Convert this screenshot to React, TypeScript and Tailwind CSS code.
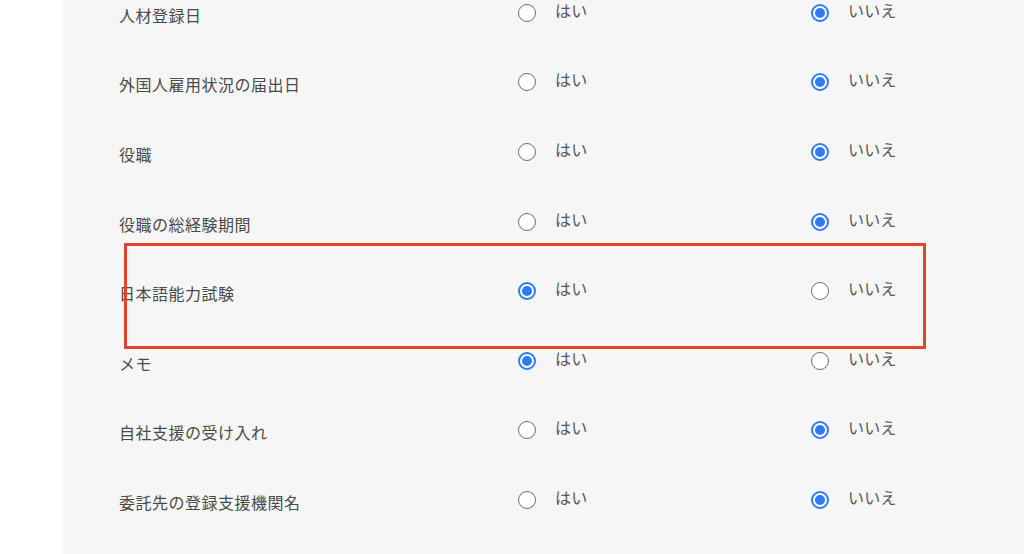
const rows: { label: string; yes: boolean }[] = [
  { label: "人材登録日", yes: false },
  { label: "外国人雇用状況の届出日", yes: false },
  { label: "役職", yes: false },
  { label: "役職の総経験期間", yes: false },
  { label: "日本語能力試験", yes: true },
  { label: "メモ", yes: true },
  { label: "自社支援の受け入れ", yes: false },
  { label: "委託先の登録支援機関名", yes: false },
];

const Radio = ({ checked }: { checked: boolean }) =>
  checked ? (
    <span className="flex items-center justify-center w-[18px] h-[18px] rounded-full border-2 border-[#2f7bf5] bg-white mb-[4px]">
      <span className="w-[10px] h-[10px] rounded-full bg-[#2f7bf5]" />
    </span>
  ) : (
    <span className="block w-[18px] h-[18px] rounded-full border-[1.5px] border-[#6e6e6e] bg-white mb-[4px]" />
  );

const Option = ({ checked, text }: { checked: boolean; text: string }) => (
  <label className="flex items-center gap-[19px]">
    <Radio checked={checked} />
    <span className="text-[16px] text-[#555555] mb-[10px] tracking-[0.3px]">{text}</span>
  </label>
);

export default function App() {
  return (
    <div
      className="relative flex w-[1024px] h-[554px] overflow-hidden bg-white"
      style={{ fontFamily: '"Noto Sans CJK JP", "Noto Sans", sans-serif' }}
    >
      <div className="ml-[63px] flex-1 bg-[#f6f6f6]">
        <div className="mt-[-20px] pl-[56px]">
          {rows.map((r) => (
            <div key={r.label} className="grid grid-cols-[399px_293px_auto] items-center h-[69.6px]">
              <span className="text-[16px] text-[#4a4a4a] tracking-[0.5px]">{r.label}</span>
              <Option checked={r.yes} text="はい" />
              <Option checked={!r.yes} text="いいえ" />
            </div>
          ))}
        </div>
      </div>
      <div className="absolute left-[124px] top-[243px] w-[802px] h-[106px] border-[3px] border-[#e3452c]" />
    </div>
  );
}
